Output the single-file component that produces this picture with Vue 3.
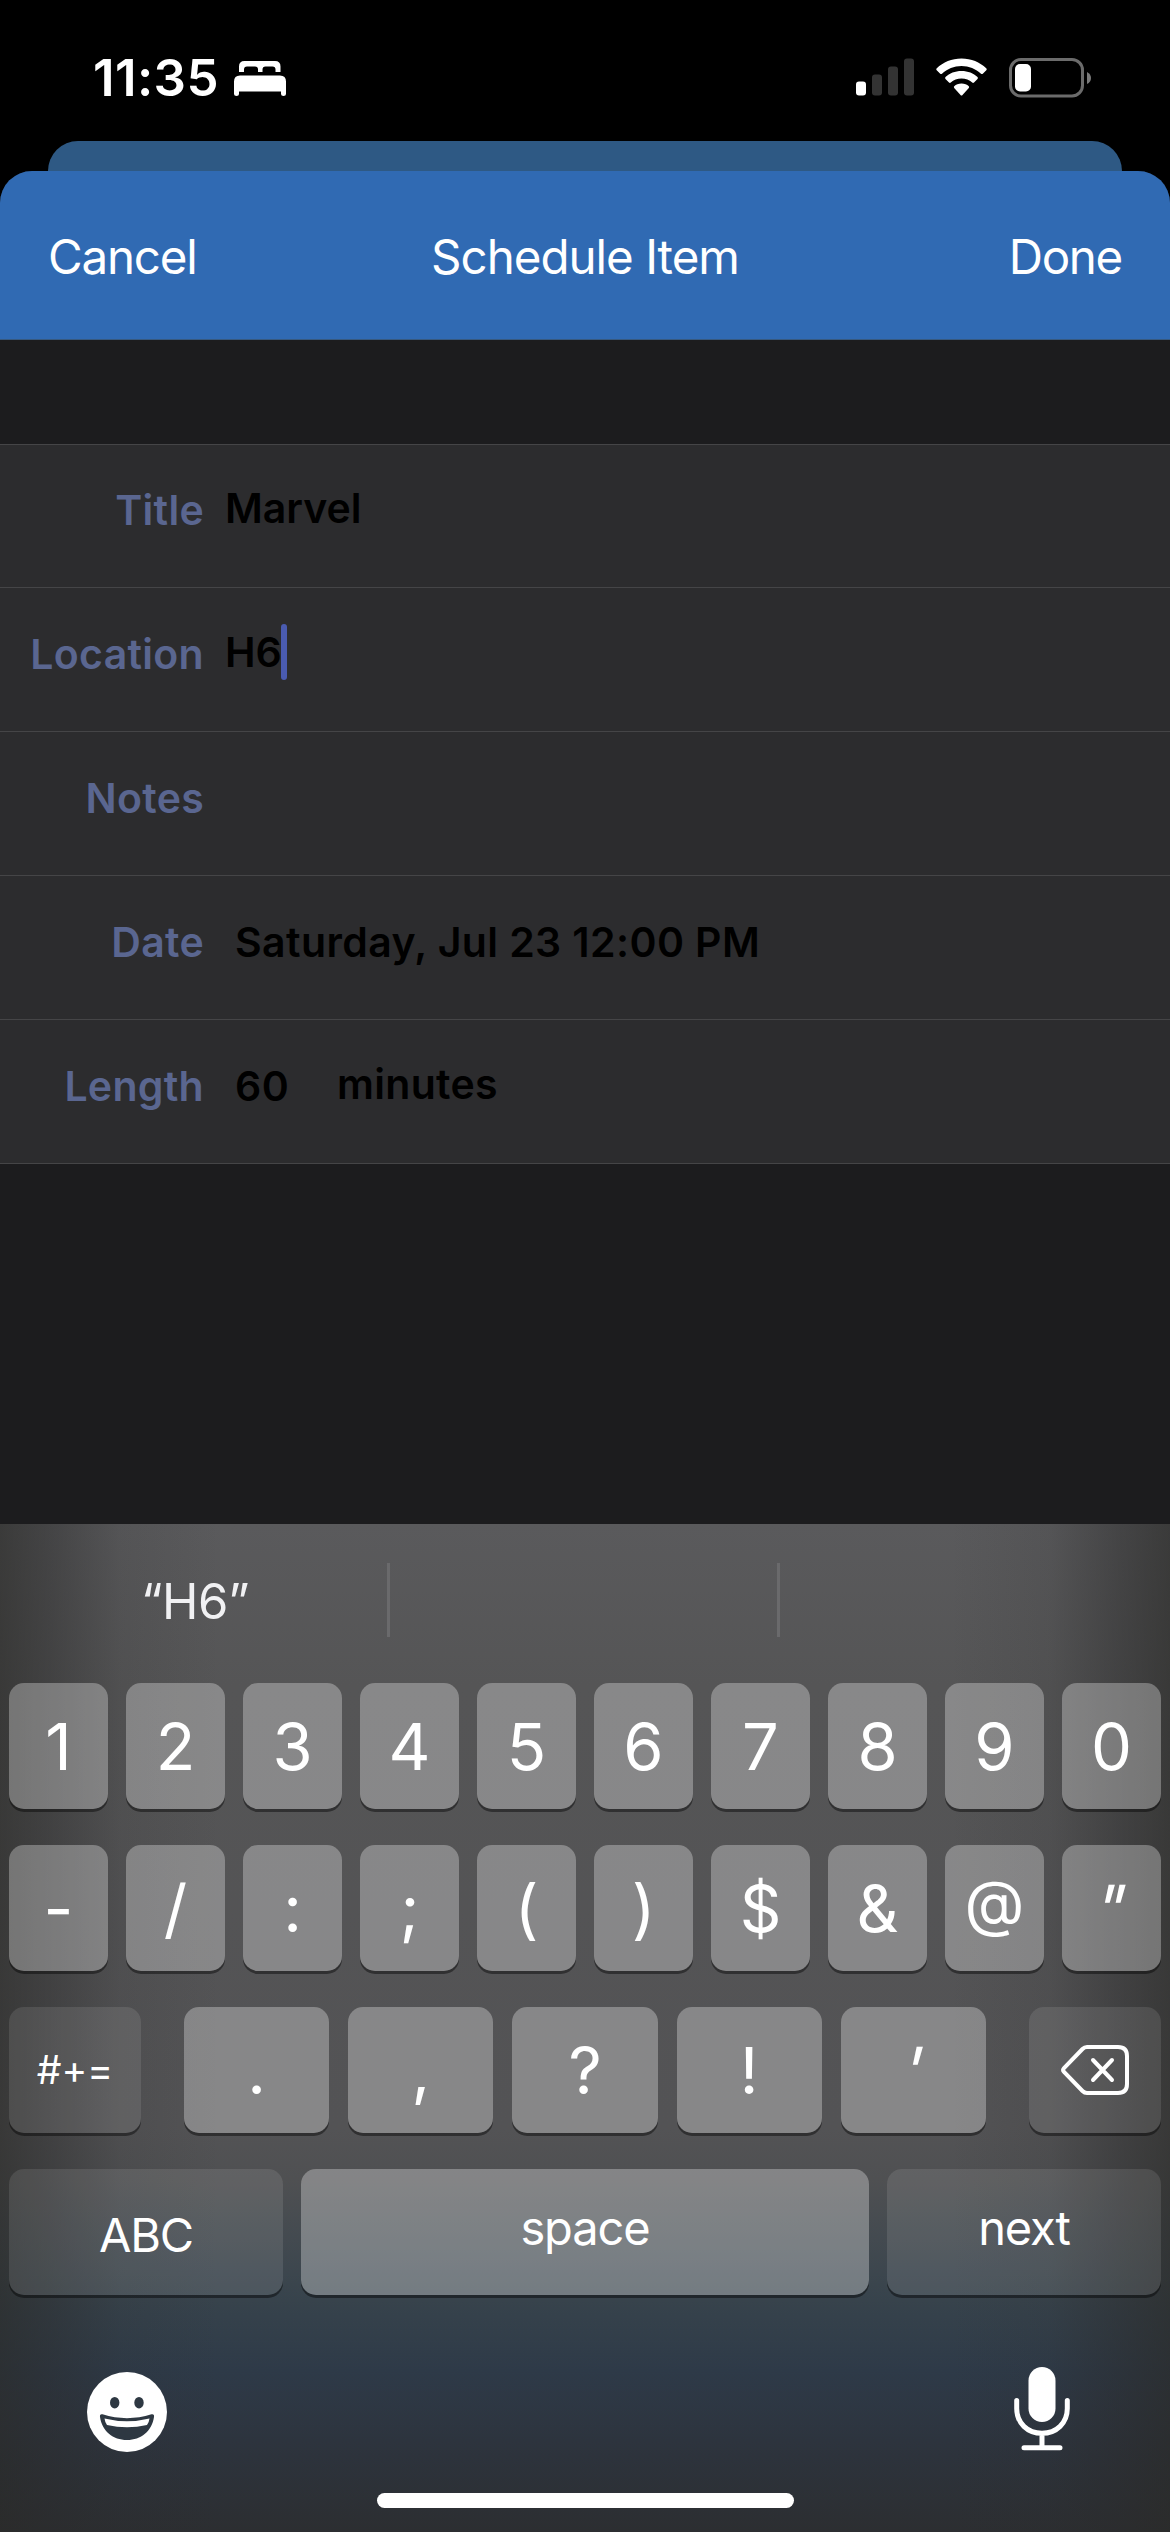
<template>
  <div class="screen">
    <header class="status-bar">
      <div class="status-left">
        <span class="clock">11:35</span>
        <svg class="bed-icon" viewBox="0 0 52 35">
          <path d="M5 11V5.500Q5 0 10.500 0H41Q46.500 0 46.500 5.500V11H41.500V8.500Q41.500 5.500 38.500 5.500H31.500Q28.500 5.500 28.500 8.500V11H24V8.500Q24 5.500 21 5.500H13Q10 5.500 10 8.500V11Z" />
          <path d="M0 33V20.500Q0 14.500 6 14.500H46Q52 14.500 52 20.500V33Q52 35 49.500 35Q47 35 47 33V30.500H5V33Q5 35 2.500 35Q0 35 0 33Z" />
        </svg>
      </div>
      <div class="status-right">
        <svg class="signal-icon" viewBox="0 0 58 38">
          <rect x="0" y="23.500" width="10" height="14" rx="3" />
          <g opacity="0.2">
            <rect x="16" y="16.500" width="10" height="21" rx="3" />
            <rect x="32" y="8.500" width="10" height="29" rx="3" />
            <rect x="48" y="0.500" width="10" height="37" rx="3" />
          </g>
        </svg>
        <svg class="wifi-icon" viewBox="0 0 51 38">
          <path d="M25.500 0.500C35.300 0.500 43.800 4.200 50.200 10.200Q51.200 11.200 50.300 12.200L46.800 15.700Q45.900 16.500 45 15.700C39.800 10.900 33 8 25.500 8S11.200 10.900 6 15.700Q5.100 16.500 4.200 15.700L0.700 12.200Q-0.200 11.200 0.800 10.200C7.200 4.200 15.700 0.500 25.500 0.500Z" />
          <path d="M25.500 13C32 13 37.500 15.300 41.500 19Q42.400 20 41.500 21L38 24.500Q37.100 25.300 36.200 24.500C33.400 22 29.700 20.500 25.500 20.500S17.600 22 14.800 24.500Q13.900 25.300 13 24.500L9.500 21Q8.600 20 9.500 19C13.500 15.300 19 13 25.500 13Z" />
          <path d="M25.500 25.500C28.500 25.500 31 26.500 32.800 28.200Q33.500 29 32.800 29.900L26.500 37Q25.500 38 24.500 37L18.200 29.900Q17.500 29 18.200 28.200C20 26.500 22.500 25.500 25.500 25.500Z" />
        </svg>
        <svg class="battery-icon" viewBox="0 0 82 40">
          <rect x="1.500" y="1.500" width="72" height="36.500" rx="10.500" fill="none" stroke="#6b6b6b" stroke-width="3" />
          <rect x="6" y="6" width="16" height="27.500" rx="5" />
          <path d="M78 14Q82 16 82 20T78 26Z" fill="#7a7a7a" />
        </svg>
      </div>
    </header>

    <div class="back-sheet"></div>

    <main class="sheet">
      <nav class="nav-bar">
        <span class="nav-cancel">Cancel</span>
        <span class="nav-title">Schedule Item</span>
        <span class="nav-done">Done</span>
      </nav>

      <section class="form">
        <div v-for="field in fields" :key="field.label" class="form-row">
          <label>{{ field.label }}</label>
          <span class="value" :class="field.kind">{{ field.value }}</span>
          <i v-if="field.focused" class="caret"></i>
          <span v-if="field.unit" class="unit">{{ field.unit }}</span>
        </div>
      </section>
    </main>

    <section class="keyboard">
      <div class="suggestions">
        <div class="suggestion">“H6”</div>
        <div class="suggestion"></div>
        <div class="suggestion"></div>
      </div>

      <div class="keys">
        <div v-for="(row, i) in symbolRows" :key="i" class="key-row">
          <div v-for="k in row" :key="k.char" class="key symbol">
            <span :class="k.name">{{ k.char }}</span>
          </div>
        </div>

        <div class="key-row punctuation-row">
          <div class="key dark side more">#+=</div>
          <div class="punctuation">
            <div v-for="k in punctuation" :key="k.char" class="key symbol">
              <span :class="k.name">{{ k.char }}</span>
            </div>
          </div>
          <div class="key dark side">
            <svg class="delete-icon" viewBox="0 0 68 50">
              <path d="M26 2H57Q66 2 66 11V39Q66 48 57 48H26Q23.500 48 21.500 46L3 27Q1.200 25 3 23L21.500 4Q23.500 2 26 2Z" />
              <path d="M32 15L51 35M51 15L32 35" />
            </svg>
          </div>
        </div>

        <div class="key-row bottom-row">
          <div class="key dark abc">ABC</div>
          <div class="key space">space</div>
          <div class="key dark next">next</div>
        </div>
      </div>

      <footer class="keyboard-footer">
        <svg class="emoji-icon" viewBox="0 0 80 80">
          <circle cx="40" cy="40" r="40" fill="#fff" />
          <ellipse cx="27.700" cy="30.700" rx="4.700" ry="5.800" fill="#2e3842" />
          <ellipse cx="52" cy="30.700" rx="4.700" ry="5.800" fill="#2e3842" />
          <path d="M15.500 42.300Q40 50 64.500 42.300Q67.500 41.700 67 45C65 59 54 68 40 68S15 59 13 45Q12.500 41.700 15.500 42.300Z" fill="#2e3842" />
          <path d="M17.500 46.500Q40 52 62.500 46.500Q62 50.500 60 53Q40 57.500 20 53Q18 50.500 17.500 46.500Z" fill="#fff" />
        </svg>
        <svg class="mic-icon" viewBox="0 0 56 84">
          <rect x="14.500" y="0" width="27" height="55" rx="13.500" fill="#fff" />
          <path d="M2.700 33.500V41.500C2.700 56 13.500 66.300 28 66.300S53.300 56 53.300 41.500V33.500M28 67V80M10 80.800H46" />
        </svg>
      </footer>
      <div class="home-indicator"></div>
    </section>
  </div>
</template>

<script setup>
import { ref } from 'vue'

const fields = ref([
  { label: 'Title', value: 'Marvel', kind: 'text' },
  { label: 'Location', value: 'H6', kind: 'text', focused: true },
  { label: 'Notes', value: '', kind: 'text' },
  { label: 'Date', value: 'Saturday, Jul 23 12:00 PM', kind: 'picker' },
  { label: 'Length', value: '60', kind: 'picker', unit: 'minutes' },
])

const names = {
  '@': 'at',
  '"': 'slanted',
  "'": 'slanted',
}

const toKeys = (chars) => [...chars].map((char) => ({ char, name: names[char] }))

const symbolRows = [toKeys('1234567890'), toKeys('-/:;()$&@"')]
const punctuation = toKeys(".,?!'")
</script>

<style>
body {
  margin: 0;
  background: #000;
}
</style>

<style scoped>
* {
  box-sizing: border-box;
}

.screen {
  display: flex;
  flex-direction: column;
  width: 1170px;
  height: 2532px;
  overflow: hidden;
  background: #000;
  color: #fff;
  font-family: Inter, 'Liberation Sans', sans-serif;
}

svg {
  display: block;
  fill: #fff;
}

.status-bar {
  display: flex;
  justify-content: space-between;
  height: 141px;
  padding: 0 79px 0 93px;
}

.status-left {
  display: flex;
  align-items: flex-start;
  padding-top: 48px;
}

.clock {
  width: 141px;
  font-size: 51px;
  line-height: 60px;
  font-weight: 600;
  letter-spacing: 0.4px;
}

.bed-icon {
  width: 52px;
  height: 35px;
  margin-top: 13px;
}

.status-right {
  display: flex;
  align-items: flex-start;
  padding-top: 58px;
}

.signal-icon {
  width: 58px;
  height: 38px;
}

.wifi-icon {
  width: 51px;
  height: 38px;
  margin: 0 22px;
}

.battery-icon {
  width: 82px;
  height: 40px;
}

.back-sheet {
  height: 30px;
  margin: 0 48px;
  border-radius: 30px 30px 0 0;
  background: #2e5984;
}

.sheet {
  height: 1353px;
  border-radius: 32px 32px 0 0;
  background: #1c1c1e;
  overflow: hidden;
}

.nav-bar {
  display: grid;
  grid-template-columns: 1fr auto 1fr;
  height: 169px;
  padding: 56px 48px 0 48px;
  background: #306ab3;
  border-bottom: 1px solid #37597f;
  font-size: 47.5px;
  line-height: 60px;
  letter-spacing: -1px;
}

.nav-cancel {
  letter-spacing: -1.2px;
}

.nav-done {
  text-align: right;
  letter-spacing: -1.3px;
}

.form {
  margin-top: 104px;
  border-top: 1px solid #454547;
  background: #2c2c2e;
}

.form-row {
  display: flex;
  height: 144px;
  padding-top: 1px;
  border-bottom: 1px solid #454547;
  color: #000;
  font-size: 41px;
  line-height: 50px;
  font-weight: 600;
  letter-spacing: 0.3px;
}

.form-row:first-child {
  height: 143px;
  padding-top: 0;
}

.form-row label {
  width: 204px;
  padding-top: 40px;
  color: #5a6690;
  text-align: right;
}

.value.text {
  padding: 38px 0 0 21px;
  letter-spacing: 0;
}

.value.picker {
  padding: 40px 0 0 31px;
  letter-spacing: 0.4px;
}

.caret {
  width: 6px;
  height: 56px;
  margin: 35px 0 0 -1px;
  border-radius: 3px;
  background: #4a5bb0;
}

.unit {
  padding: 38px 0 0 48px;
}

.keyboard {
  flex: 1;
  background:
    linear-gradient(90deg, rgba(42, 42, 40, 0.65) 0, rgba(42, 42, 42, 0.45) 50px, rgba(42, 42, 42, 0.12) 120px, transparent 220px),
    linear-gradient(270deg, rgba(42, 42, 40, 0.65) 0, rgba(42, 42, 42, 0.45) 50px, rgba(42, 42, 42, 0.12) 120px, transparent 220px),
    linear-gradient(#5a5a5c 0, #555556 16%, #535355 60%, #4f5052 65%, #434a50 71%, #37434c 77%, #2e3a48 84%, #2d343e 91%, #2c2e31 100%);
}

.suggestions {
  display: grid;
  grid-template-columns: repeat(3, 1fr);
  height: 159px;
  padding-top: 39px;
}

.suggestion {
  height: 74px;
  color: #f1f1f3;
  font-size: 49px;
  line-height: 78px;
  letter-spacing: -0.5px;
  text-align: center;
}

.suggestion + .suggestion {
  margin-left: -3px;
  border-left: 3px solid #6a6a6c;
}

.keys {
  display: flex;
  flex-direction: column;
  gap: 36px;
  padding: 0 9px;
}

.key-row {
  display: flex;
  gap: 18px;
}

.key {
  display: flex;
  align-items: center;
  justify-content: center;
  flex: 1;
  height: 126px;
  border-radius: 15px;
  background: rgba(255, 255, 255, 0.3);
  box-shadow: 0 3px 0 rgba(0, 0, 0, 0.42);
  font-size: 65px;
  line-height: 122px;
}

.key.symbol {
  padding-top: 2px;
}

.key.dark {
  background: rgba(255, 255, 255, 0.1);
}

.key.side {
  flex: 0 0 132px;
}

.punctuation-row {
  justify-content: space-between;
}

.punctuation {
  display: flex;
  gap: 19px;
  width: 802px;
}

.key.more {
  font-size: 39px;
}

.key.abc,
.key.next {
  flex: 0 0 274px;
}

.key.abc {
  padding-top: 6px;
  font-size: 47px;
  letter-spacing: -1.2px;
}

.key.space,
.key.next {
  padding-bottom: 8px;
  font-size: 47px;
  letter-spacing: -1.1px;
}

.at {
  padding-bottom: 12px;
  font-size: 62px;
  line-height: 100px;
}

.slanted {
  transform: skewX(-14deg);
}

.delete-icon {
  width: 68px;
  height: 50px;
  fill: none;
  stroke: #fff;
  stroke-width: 4;
  stroke-linecap: round;
}

.keyboard-footer {
  display: flex;
  justify-content: space-between;
  height: 198px;
  padding: 72px 100px 0 87px;
}

.emoji-icon {
  width: 80px;
  height: 80px;
  margin-top: 5px;
}

.mic-icon {
  width: 56px;
  height: 84px;
  fill: none;
  stroke: #fff;
  stroke-width: 5;
  stroke-linecap: round;
}

.mic-icon rect {
  stroke: none;
}

.home-indicator {
  width: 417px;
  height: 15px;
  margin: 0 auto;
  border-radius: 8px;
  background: #fff;
}
</style>
